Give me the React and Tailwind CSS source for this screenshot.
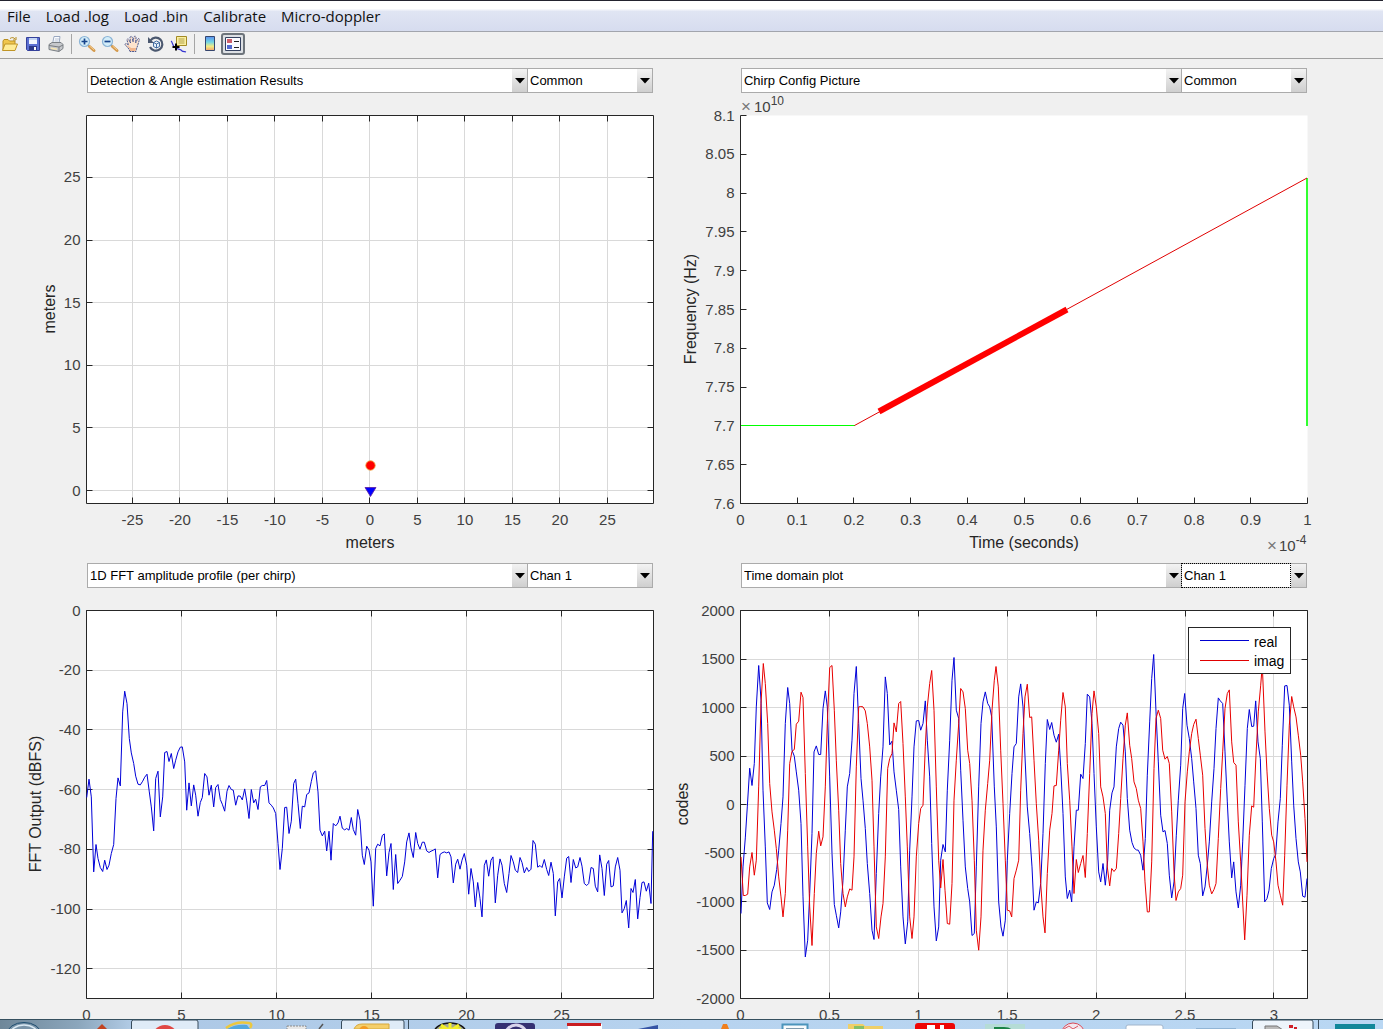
import { useState } from "react";

const FONT = "'Liberation Sans', Arial, sans-serif";

// Plot box shared by the four axes, in viewBox units
const BOX = { left: 86.5, right: 653.5, top: 22.5, bottom: 410.5 };

const menus = ["File", "Load .log", "Load .bin", "Calibrate", "Micro-doppler"];

const snap = (v) => Math.floor(v) + 0.5;

// Samples are stored in thirds of a unit, as blocks that share one origin
const toPoints = (blocks) =>
  blocks
    .map(([ox, oy, data]) =>
      data
        .split(" ")
        .map((pair) => {
          const [x, y] = pair.split(",").map(Number);
          return `${(ox + x / 3).toFixed(1)},${(oy + y / 3 + 0.2).toFixed(1)}`;
        })
        .join(" ")
    )
    .join(" ");

const fftTrace = toPoints([
  [80, 12, "20,592 27,537 34,590 41,815 48,733 54,775 61,802 68,814 74,780 81,808 87,795 94,760 101,733 108,595 114,533 121,557 128,335 134,273 141,310 148,415 154,458 161,490 167,528 174,552 181,554 188,543 194,531 201,522 208,575 214,620 221,692 227,535 234,513 241,650 248,590 254,457 261,454 267,484 274,460 281,505 287,480 294,455 301,441 307,440 314,485 320,630 327,548 334,617 341,554 347,585 354,648 361,607 367,592 374,520 381,530 387,585 394,555 401,620 407,562 414,553 421,598 427,612 434,633 441,573 447,556 454,568 460,570 467,615 474,587 481,588 487,599 494,566 500,602 507,655 514,568 521,608 527,597 534,628 541,560 547,556 554,556 560,541 567,608 574,615"],
  [270, 152, "10,203 17,220 24,310 30,388 37,325 44,202 50,201 57,280 64,243 71,130 77,117 84,190 91,265 97,198 104,200 110,163 117,158 124,124 130,98 137,92 144,155 150,270 157,287 164,273 170,332 177,273 183,360 190,250 197,257 204,248 210,228 217,264 224,269 230,265 237,270 244,232 250,268 257,285 263,208 270,240 277,345 283,373 290,318 297,330 303,365 310,498 317,325 323,312 330,317 337,286 343,281 350,407 357,337 363,310 370,448 377,343 383,430 390,420 397,409 404,365 410,305 417,278 423,323 430,352 437,277 443,310 450,327 457,306 463,306 470,332 477,337 483,333 490,330 496,326 503,413 510,343 516,338 523,335 530,338 537,335 543,350 550,428 557,372 563,357"],
  [460, 192, "0,267 6,240 13,220 20,255 26,342 33,265 40,305 46,380 53,307 60,355 66,410 73,255 79,239 86,288 93,240 99,230 106,368 113,285 120,236 126,255 133,310 140,337 147,280 153,226 160,245 166,270 173,277 180,232 186,247 193,278 200,262 206,274 213,267 219,181 226,192 233,261 240,256 246,262 253,238 260,268 266,286 273,246 280,280 286,407 293,305 299,295 306,353 313,290 320,234 326,229 333,307 340,238 347,263 353,260 360,232 366,258 373,310 380,316 386,310 393,262 400,265 406,318 413,335 419,224 426,265 433,346 440,252 446,241 453,320 460,317 466,260 473,232 480,270 486,398 493,385 499,361 506,443 513,325 519,337 526,298 533,416 540,352 546,307 552,305 559,333 566,309 573,370 578,153"],
]);

const realTrace = toPoints([
  [81, 12, "18,940 24,800 31,713 37,620 44,504 51,556 58,490 64,320 71,196 78,300 84,570 91,740 97,908 104,928 111,875 118,855 125,808 131,750 138,670 144,590 151,370 158,262 164,310 171,450 178,468 184,515 191,570 198,670 204,890 211,1070 218,1020 224,880 231,700 237,455 244,437 251,463 257,463 264,325 271,272 277,320 284,530 291,760 298,913 304,945 311,983 317,935 324,840 331,690 337,560 344,520 351,420 357,280 364,199 371,370 378,535 384,600 391,685 397,790 404,880 411,990 417,1018 424,820 431,640 437,530 444,440 451,230 457,280 464,434 471,423 477,515 484,570 491,628 497,800 504,950 511,1031 518,965 524,750 531,590 537,440 544,362 551,361 557,390 564,370"],
  [271, 12, "1,302 7,420 14,530 20,730 27,920 34,1022 41,980 47,780 54,733 61,755 67,570 74,420 81,240 87,172 94,330 101,355 107,510 114,660 121,800 128,865 134,905 141,1006 148,1000 154,800 161,560 168,370 174,305 181,275 188,310 194,320 200,350 208,560 214,680 221,905 228,980 234,1008 241,960 247,780 254,640 261,520 267,440 274,430 281,290 287,251 294,320 300,470 307,620 314,700 321,800 327,930 334,905 340,908 347,850 354,700 361,490 367,358 374,388 380,367 387,405 394,426 401,402 407,500 414,640 421,830 427,895 434,870 440,905 447,740 454,630 460,630 467,522 474,535 481,430 487,282 494,290 501,370 507,520 514,680 521,815 527,845 534,790 541,855 548,780 554,630 561,578 567,560"],
  [461, -33, "4,575 11,520 17,501 24,510 31,590 37,730 44,825 51,862 57,878 64,884 70,885 77,900 84,945 91,850 97,660 104,500 110,370 116,298 123,470 130,620 137,780 144,830 150,826 157,865 163,960 170,1028 177,980 184,840 190,735 197,630 203,460 209,415 216,510 223,550 230,610 236,680 243,760 250,900 256,925 263,1022 270,995 277,930 283,860 290,740 297,640 303,520 310,428 316,437 323,445 330,590 337,740 343,860 350,968 356,920 363,1010 370,1058 377,990 383,860 390,690 397,520 403,463 410,514 416,513 422,437 429,560 436,610 442,800 449,1040 456,1030 462,1005 469,940 476,910 482,898 489,800 496,730 502,570 509,392 516,391 523,450 530,620 536,750 543,850 550,920 556,950 563,1023 570,1026 576,970"],
]);

const imagTrace = toPoints([
  [81, 12, "18,770 25,886 31,886 38,882 44,800 51,757 58,825 64,780 71,560 78,310 85,190 91,250 98,370 104,550 111,635 118,690 124,745 131,830 138,890 144,950 151,880 158,690 164,490 171,453 178,448 184,372 191,363 198,276 204,292 211,520 218,740 224,920 231,1036 238,880 244,760 251,693 257,737 264,710 271,560 277,370 284,202 291,196 298,330 304,480 311,630 317,790 324,880 331,920 337,890 344,866 351,870 357,770 364,500 371,320 377,319 384,320 391,332 397,370 404,440 411,540 417,740 424,980 431,1015 438,950 444,910 451,770 458,505 464,475 471,460 477,368 484,395 491,310 497,304 504,430 511,590 517,740 524,950 531,1015 537,950 544,770 551,670 557,625 564,615 571,440 577,320 584,250"],
  [271, 12, "20,211 27,330 34,560 41,780 47,863 54,778 60,870 67,970 74,972 81,850 87,600 94,480 101,370 107,265 114,275 121,325 128,450 134,490 141,600 148,780 154,990 161,1050 168,950 174,750 181,630 188,550 194,480 201,330 208,240 213,199 220,260 227,450 234,610 241,780 247,930 254,932 260,950 267,835 274,810 281,780 287,570 294,400 300,290 307,252 314,352 320,350 327,480 334,610 341,720 347,850 354,950 360,998 367,820 374,690 381,640 387,557 394,556 401,450 407,360 414,277 421,320 427,490 434,600 441,740 447,880 454,778 460,817 467,790 474,766 481,832 487,700 494,520 501,340 507,272 514,320 521,400 527,560 534,590 541,640 547,800 554,857 560,805 567,814"],
  [461, -33, "4,940 11,835 17,730 24,610 31,510 37,473 44,570 50,610 57,680 64,700 70,735 77,760 84,860 90,980 97,1070 103,1070 110,920 117,640 123,490 130,465 137,490 143,585 150,612 157,604 163,625 170,770 177,950 183,1036 190,1010 197,1000 203,960 210,740 217,650 223,590 230,535 236,508 243,492 250,550 256,600 263,660 270,820 277,930 283,990 290,1016 297,1003 303,985 310,850 317,700 323,590 330,460 337,415 343,404 350,560 356,622 363,630 370,800 377,920 383,1040 389,1154 396,1020 403,840 410,752 416,756 423,600 430,470 437,390 442,330 450,530 456,650 463,760 470,840 476,860 483,920 489,990 496,1020 503,1050 509,900 516,690 523,510 530,424 536,455 543,485 550,540 557,600 563,680 570,790 576,920"],
]);

// [label, position] pairs for each axis
const detectX = [-25, -20, -15, -10, -5, 0, 5, 10, 15, 20, 25].map((v) => [v, 369.9 + v * 9.5]);
const detectY = [0, 5, 10, 15, 20, 25].map((v) => [v, 397.6 - v * 12.53]);
const chirpX = [0, 0.1, 0.2, 0.3, 0.4, 0.5, 0.6, 0.7, 0.8, 0.9, 1].map((v) => [v, 86.5 + v * 567]);
const chirpY = [7.6, 7.65, 7.7, 7.75, 7.8, 7.85, 7.9, 7.95, 8, 8.05, 8.1].map((v) => [v, 410.5 - (v - 7.6) * 776]);
const fftX = [0, 5, 10, 15, 20, 25].map((v) => [v, 86.5 + v * 19]);
const fftY = [0, -20, -40, -60, -80, -100, -120].map((v) => [v, 22.5 - v * 2.985]);
const timeX = [0, 0.5, 1, 1.5, 2, 2.5, 3].map((v) => [v, 86.5 + v * 177.8]);
const timeY = [2000, 1500, 1000, 500, 0, -500, -1000, -1500, -2000].map((v) => [v, 216.5 - v * 0.097]);

function Axes({ label, xTicks, yTicks, xLabel, yLabel, yLabelX, boxed = true, children }) {
  const { left, right, top, bottom } = BOX;
  return (
    <svg viewBox="0 0 654 470" className="block w-full h-auto overflow-visible" role="img" aria-label={label} fontFamily={FONT}>
      <rect x={left} y={top} width={right - left} height={bottom - top} fill="#fff" />

      {/* Grid */}
      {boxed && (
        <g stroke="#d9d9d9">
          {xTicks.map(([v, x]) => (
            <line key={v} x1={snap(x)} x2={snap(x)} y1={top} y2={bottom} />
          ))}
          {yTicks.map(([v, y]) => (
            <line key={v} x1={left} x2={right} y1={snap(y)} y2={snap(y)} />
          ))}
        </g>
      )}

      {/* Frame and tick marks */}
      <g stroke="#262626" fill="none">
        <path d={boxed ? `M${left} ${top}H${right}V${bottom}H${left}Z` : `M${left} ${top}V${bottom}H${right}`} />
        {xTicks.map(([v, x]) => (
          <path key={v} d={`M${snap(x)} ${bottom}v-6${boxed ? `M${snap(x)} ${top}v6` : ""}`} />
        ))}
        {yTicks.map(([v, y]) => (
          <path key={v} d={`M${left} ${snap(y)}h6${boxed ? `M${right} ${snap(y)}h-6` : ""}`} />
        ))}
      </g>

      {children}

      {/* Labels */}
      <g fill="#404040" fontSize="15">
        {xTicks.map(([v, x]) => (
          <text key={v} x={x} y={bottom + 21} textAnchor="middle">{v}</text>
        ))}
        {yTicks.map(([v, y]) => (
          <text key={v} x={left - 6} y={y + 5} textAnchor="end">{v}</text>
        ))}
      </g>
      <g fill="#262626" fontSize="16" textAnchor="middle">
        {xLabel && <text x="370" y={bottom + 44}>{xLabel}</text>}
        <text transform={`translate(${yLabelX} 216) rotate(-90)`}>{yLabel}</text>
      </g>
    </svg>
  );
}

function PopupMenu({ label, options, className = "", focused = false }) {
  const [value, setValue] = useState(options[0]);
  return (
    <div className={`relative h-[25px] ${className}`}>
      <select
        aria-label={label}
        value={value}
        onChange={(e) => setValue(e.target.value)}
        className="block w-full h-full appearance-none rounded-none border border-[#ababab] bg-white pl-[2px] pr-4 text-[13px] text-black outline-none"
      >
        {options.map((o) => (
          <option key={o}>{o}</option>
        ))}
      </select>
      {focused && <span className="pointer-events-none absolute inset-y-0 left-0 right-4 border border-dotted border-black" />}
      <span className="pointer-events-none absolute right-px inset-y-px w-[15px] flex items-center justify-center bg-linear-to-b from-[#f3f3f3] to-[#cfcfcf]">
        <svg width="10" height="6" viewBox="0 0 10 6"><path d="M0 0h10L5 5.5z" fill="#000" /></svg>
      </span>
    </div>
  );
}

function Panel({ name, views, channels, focused, children }) {
  return (
    <section>
      <div className="flex pl-[13.3%] pr-px">
        <PopupMenu label={`${name} view`} options={views} className="flex-1" />
        <PopupMenu label={`${name} channel`} options={channels} className="w-[126px] -ml-px" focused={focused} />
      </div>
      {children}
    </section>
  );
}

function ToolButton({ label, children, pressed }) {
  return (
    <button
      type="button"
      aria-label={label}
      aria-pressed={pressed}
      className={
        pressed
          ? "w-6 h-[22px] flex items-center justify-center rounded-[3px] border-2 border-[#6d747b] bg-[#dde0e4]"
          : "w-4 h-[22px] flex items-center justify-center"
      }
    >
      <svg width="16" height="16" viewBox="0 0 16 16" className="shrink-0 overflow-visible">{children}</svg>
    </button>
  );
}

function Magnifier({ plus }) {
  return (
    <>
      <path d="M9 9l2 2" stroke="#8a8f98" strokeWidth="2" />
      <path d="M10.5 10.5l4.5 4" stroke="#d59a4c" strokeWidth="3" strokeLinecap="round" />
      <path d="M10.8 10.2l4 3.5" stroke="#f6cd8e" strokeLinecap="round" />
      <circle cx="5.5" cy="5.5" r="5" fill="#d3edf9" stroke="#8bb4d6" strokeWidth="1.2" />
      <path d={plus ? "M2.5 5.5h6M5.5 2.5v6" : "M2.5 5.5h6"} stroke="#17448c" strokeWidth="1.7" />
    </>
  );
}

function Separator() {
  return <span className="w-px h-5 bg-[#a5a5a5]" />;
}

function Toolbar() {
  return (
    <div className="flex items-center gap-[7px] h-[27px] shrink-0 pl-[2px] pb-[2px] border-b border-[#a0a0a0] bg-[#f0f0f0]" role="toolbar">
      <ToolButton label="Open">
        <path d="M1 14V5l1-1.500h4L7.500 5H13v3" fill="#f0c64e" stroke="#b98f20" />
        <path d="M8 2.500c2-1.500 4-1 5 .5M14 1v3h-3" fill="none" stroke="#b58b1c" />
        <path d="M.5 14.500L3 8h12.500L13 14.500z" fill="#ffec96" stroke="#c09526" />
      </ToolButton>
      <ToolButton label="Save">
        <path d="M1.500 1.500h13v13h-12l-1-1z" fill="#5c70d2" stroke="#34409a" />
        <path d="M4 2h8v6H4z" fill="#f2f6fd" />
        <path d="M4 2h8v2H4z" fill="#c4d6f4" />
        <path d="M4 10h8v4H4z" fill="#2c3888" />
        <path d="M9 11h2v3H9z" fill="#fff" />
      </ToolButton>
      <ToolButton label="Print">
        <path d="M4.500 8L6 .5h6l-1 7.500z" fill="#fafcff" stroke="#9aa8c0" />
        <path d="M7 3h4M6.500 5h4" stroke="#b9c3d4" />
        <path d="M1 8.500L4 6.500h9l2 2v4l-4 3-10-2z" fill="#c6c8cc" stroke="#7b8085" />
        <path d="M1 9.500l10 1.500v4M11 11l4-2" fill="none" stroke="#777b80" />
        <path d="M3 11.500l6 1v1.500l-6-1z" fill="#f7e6b2" />
      </ToolButton>
      <Separator />
      <ToolButton label="Zoom in"><Magnifier plus /></ToolButton>
      <ToolButton label="Zoom out"><Magnifier /></ToolButton>
      <ToolButton label="Pan">
        <path
          d="M5 15.500C4 12 1 10 0 8.500c.5-1.500 2-1 3.500.8L2 4c0-1.500 1.500-1.500 2 0l1.500 3L5 1.500C5.500 0 7 0 7.300 1.500L8 6l1-5c.6-1.300 2-1 2 .5L10.600 7l2-4c1-1 2-.3 1.700 1L12.500 10c-.5 2-1.500 3-1.500 5.500z"
          fill="#fde3cd"
          stroke="#3c4b88"
          strokeWidth=".9"
          strokeDasharray="2 .7"
        />
        <path d="M5 15c0-3-2-4-3-5 2 0 3 1 4 2h5l-.5 3z" fill="#f2b68d" />
      </ToolButton>
      <ToolButton label="Rotate 3D">
        <path d="M2.500 4.500A6.500 6.500 0 1 1 2 11" fill="none" stroke="#4b586f" strokeWidth="2.200" />
        <path d="M0 1v6h6z" fill="#4b586f" />
        <path d="M5.500 6.500L8.500 5l3 1.500v4l-3 1.500-3-1.500zM5.500 6.500l3 1.500 3-1.500M8.500 8v4" fill="#e7f1fa" stroke="#35619a" strokeWidth=".9" />
      </ToolButton>
      <ToolButton label="Data cursor">
        <path d="M5.500 .5h10v9h-10z" fill="#fbf0a0" stroke="#a38a25" />
        <path d="M7.500 3h6M7.500 5h6M7.500 7h6" stroke="#b2a04c" />
        <path d="M0 5c2 1 1 6 5 7 3 2 5 1 6 3 1 1 3 .5 4 1" fill="none" stroke="#3434d0" strokeWidth="1.200" />
        <path d="M5 7.500v7M1.500 11h7" stroke="#000" strokeWidth="2" />
      </ToolButton>
      <Separator />
      <div className="flex items-center gap-[3px]">
        <ToolButton label="Insert colorbar">
          <defs>
            <linearGradient id="cbar" x1="0" y1="0" x2="0" y2="1">
              <stop offset="0" stopColor="#5b8ff0" />
              <stop offset=".4" stopColor="#72d5e4" />
              <stop offset=".7" stopColor="#f3ec83" />
              <stop offset="1" stopColor="#f4a36b" />
            </linearGradient>
          </defs>
          <path d="M3.500 .5h9v14h-9z" fill="url(#cbar)" stroke="#35466e" />
        </ToolButton>
        <ToolButton label="Insert legend" pressed>
          <path d="M.5 1.500h15v13H.5z" fill="#fbfbff" stroke="#34415f" />
          <path d="M2 3h5v4H2z" fill="#cf5f6b" />
          <path d="M2 9h5v4H2z" fill="#5368cf" />
          <path d="M9 5.500h5M9 11.500h5" stroke="#222" />
        </ToolButton>
      </div>
    </div>
  );
}

function Taskbar() {
  return (
    <footer className="h-[10px] shrink-0 overflow-hidden border-t border-[#35505f] bg-linear-to-r from-[#aac5e3] via-[#b7d3ef] to-[#b9d7f3]">
      <svg width="1383" height="9" className="block" aria-hidden="true">
        <defs>
          <linearGradient id="startShade">
            <stop offset="0" stopColor="#6f8799" />
            <stop offset=".6" stopColor="#8ba6bc" />
            <stop offset="1" stopColor="#b0cae4" />
          </linearGradient>
        </defs>
        <path d="M0 0h130v9H0z" fill="url(#startShade)" />
        <ellipse cx="24" cy="14" rx="17" ry="11.500" fill="#7993a8" stroke="#1e4d70" />
        <ellipse cx="24" cy="15" rx="14" ry="10" fill="none" stroke="#d9e8f3" strokeWidth="1.500" />
        <path d="M97 9l5-5 5 5z" fill="#c24321" />
        <path d="M131.500 10V2q0-2 2-2H196q2 0 2 2v8" fill="#dfebf7" stroke="#384c5c" />
        <circle cx="165" cy="18" r="13" fill="#e04744" />
        <path d="M227 9c6-4 14-5 20-4l3 4z" fill="#54a8de" />
        <path d="M226 8c8-6 17-6 23-5q4 1 1 5" fill="none" stroke="#ecc83e" strokeWidth="2.500" />
        <path d="M287 6h19v4h-19z" fill="#e8e8e8" stroke="#8b8b8b" strokeDasharray="2 1" />
        <path d="M319 9l4-5" stroke="#555" strokeWidth="1.500" />
        <path d="M341.500 10V2q0-2 2-2H402q2 0 2 2v8M408.500 0v10" fill="#dfebf7" stroke="#384c5c" />
        <path d="M354 9q2-5 8-5h27v5z" fill="#f4cf6b" stroke="#d5a83e" />
        <circle cx="364" cy="11" r="5" fill="#f39c22" />
        <ellipse cx="450" cy="13" rx="16" ry="10" fill="#a5a994" stroke="#111" strokeWidth="1.500" />
        <path d="M439 9h22M450 3v6M441 5l6 4M459 5l-6 4" stroke="#f3f029" strokeWidth="3" />
        <rect x="495" y="3" width="40" height="10" rx="3" fill="#353072" />
        <circle cx="516" cy="16" r="11" fill="none" stroke="#d8d4ec" strokeWidth="3" />
        <path d="M568 4h34v6h-34z" fill="#fff" />
        <path d="M567 3h34v3h-34z" fill="#c91c20" />
        <path d="M638 9l20-4v4z" fill="#3554a5" />
        <path d="M721 9l2-5h4l2 5z" fill="#f07f1c" />
        <path d="M782.500 10V4.500h25V10" fill="#f8fbfd" stroke="#4b94bb" strokeWidth="2" />
        <path d="M786 8h18v2h-18z" fill="#7e9aad" />
        <path d="M848 9V4h15l2 2h18v4z" fill="#efcf68" />
        <path d="M854 6h10v3h-10z" fill="#85c068" />
        <rect x="915" y="3" width="40" height="10" rx="3" fill="#ee0606" />
        <path d="M927 5h8v4h-8zM940 5h4v4h-4z" fill="#fff" />
        <path d="M985 4h40v6h-40z" fill="#b5dcd6" />
        <path d="M994 7h10q6 0 8 3h-18z" fill="#188346" />
        <circle cx="1073" cy="15" r="12" fill="#f3e7ef" stroke="#d84b5a" />
        <path d="M1064 9l5-3 4 3 5-3" stroke="#db5663" fill="none" />
        <rect x="1126" y="5" width="37" height="10" rx="2" fill="#fff" stroke="#a1b5cb" />
        <path d="M1196 8h40v2h-40z" fill="#91b5d6" />
        <path d="M1252.500 10V2q0-2 2-2H1311q2 0 2 2v8M1318.500 0v10" fill="#edf4fb" stroke="#384c5c" />
        <path d="M1265 9V6h12l6 4" fill="#bbb" stroke="#777" />
        <path d="M1289 5h4v3h-4zM1294 7h3v3h-3z" fill="#cf2028" />
        <path d="M1335 4h40v6h-40z" fill="#11879a" />
      </svg>
    </footer>
  );
}

export default function App() {
  return (
    <div className="h-screen flex flex-col overflow-hidden bg-[#f0f0f0] font-['Liberation_Sans',Arial,sans-serif]">
      {/* Menu bar */}
      <nav className="flex items-center h-8 shrink-0 gap-[15px] pl-[7px] border-t border-t-[#23232f] border-b border-b-[#a2a5ad] bg-linear-to-b from-white from-25% via-[#e0e5f3] via-35% to-[#d6dcef] font-['Open_Sans','Noto_Sans',sans-serif] text-[15px] text-[#111]">
        {menus.map((m) => (
          <button key={m} type="button">{m}</button>
        ))}
      </nav>

      <Toolbar />

      <main className="flex-1 min-h-0 overflow-hidden grid grid-cols-2 content-start pt-[9px] pr-[75px]">
        <Panel name="Detection" views={["Detection & Angle estimation Results"]} channels={["Common"]}>
          <Axes label="Detection results" xTicks={detectX} yTicks={detectY} xLabel="meters" yLabel="meters" yLabelX={55}>
            <circle cx="370.500" cy="372.500" r="4.700" fill="#f00" stroke="#f0a030" strokeWidth=".8" />
            <path d="M365 394.500h11l-5.500 9z" fill="#00f" stroke="#5a1aa0" strokeWidth=".8" />
          </Axes>
        </Panel>

        <Panel name="Chirp" views={["Chirp Config Picture"]} channels={["Common"]}>
          <Axes label="Chirp configuration" xTicks={chirpX} yTicks={chirpY} xLabel="Time (seconds)" yLabel="Frequency (Hz)" yLabelX={42} boxed={false}>
            <rect x="87" y="332" width="114" height="1" fill="#0f0" />
            <rect x="652" y="85" width="2" height="248" fill="#30ff30" />
            <path d="M200.500 332.500L653 85" stroke="#e00000" />
            <path d="M225 318.500L413 216.500" stroke="#f00" strokeWidth="6" />
            <g fill="#404040" fontSize="15">
              <text x="87" y="19" fill="#777" fontSize="17">×</text>
              <text x="100" y="19">10<tspan dy="-7" fontSize="12">10</tspan></text>
              <text x="613" y="458" fill="#777" fontSize="17">×</text>
              <text x="625" y="458">10<tspan dy="-7" fontSize="12">-4</tspan></text>
            </g>
          </Axes>
        </Panel>

        <Panel name="FFT" views={["1D FFT amplitude profile (per chirp)"]} channels={["Chan 1"]}>
          <Axes label="1D FFT amplitude" xTicks={fftX} yTicks={fftY} yLabel="FFT Output (dBFS)" yLabelX={41}>
            <polyline points={fftTrace} fill="none" stroke="#0000d8" />
          </Axes>
        </Panel>

        <Panel name="Time domain" views={["Time domain plot"]} channels={["Chan 1"]} focused>
          <Axes label="Time domain samples" xTicks={timeX} yTicks={timeY} yLabel="codes" yLabelX={34}>
            <polyline points={realTrace} fill="none" stroke="#0000d8" />
            <polyline points={imagTrace} fill="none" stroke="#e80000" />
            <rect x="534.500" y="39.500" width="102" height="46" fill="#fff" stroke="#262626" />
            <path d="M546 52.500h49" stroke="#0000d0" />
            <path d="M546 72.500h49" stroke="#e00000" />
            <g fontSize="14" fill="#000">
              <text x="600" y="59">real</text>
              <text x="600" y="78">imag</text>
            </g>
          </Axes>
        </Panel>
      </main>

      <Taskbar />
    </div>
  );
}
